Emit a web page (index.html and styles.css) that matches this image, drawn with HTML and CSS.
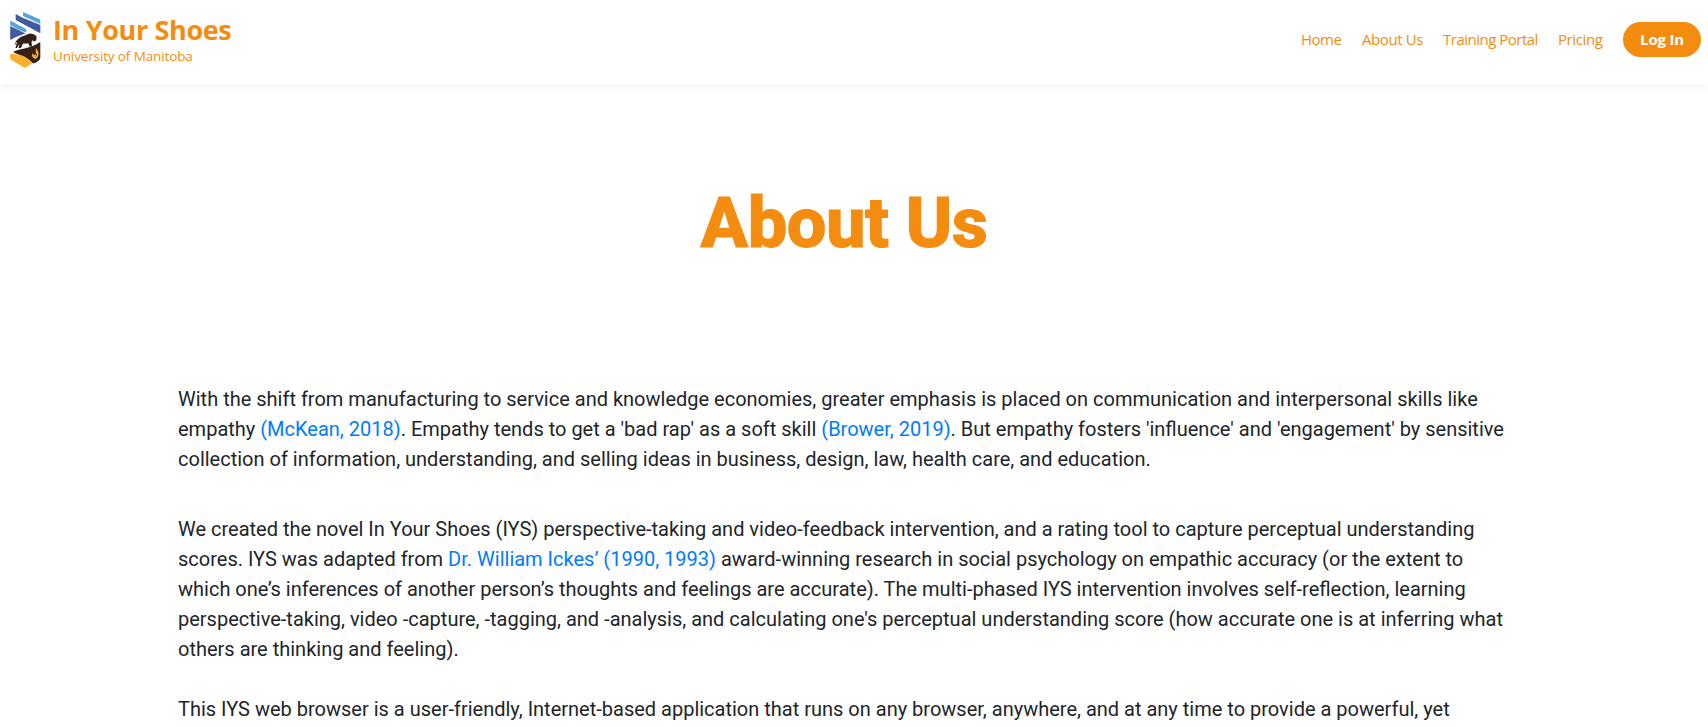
FILE: index.html
```html
<!DOCTYPE html>
<html lang="en"><head><meta charset="utf-8"><title>In Your Shoes</title><link rel="stylesheet" href="styles.css"></head>
<body>
<header class="navbar">
<a class="brand">
<svg class="logo" width="32" height="56" viewBox="0 0 32 56">
<path d="M13 0L30.3 7.5V12L13 4ZM.2 8.5L16 17V20.5L10 18.5L.2 13Z" fill="#55a5d6"/>
<path d="M5.7 2L12 5.5L30.3 13V21.3L5.7 8ZM.2 14L15.5 21.5L7 24.5L.2 28Z" fill="#4059a0"/>
<path d="M9 26.5C11 24 14 24 17 22.5C20 20.5 23 21.5 25 23C27 24 27 26 26 28.5L24 29.5L22.5 28.2L21.5 30L22 34.5H19.5L18.5 31.5H13L11 36H8.5L9.5 31.5L7 36H5.5L7 30C5 30 6 34 4.5 33C5.5 30 6 28 9 26.5Z" fill="#352018"/>
<path d="M3 40C10 36 20 37 30.3 30V45.5Q30 49.5 23 51.5C18 45 9 43.5 3 40Z" fill="#352018"/>
<path d="M.2 42C8 42 17 43 22 51.5L15 56L3 49Q.2 47.5 .2 46Z" fill="#fbaf2f"/>
<path d="M26 36C29 40 30 43 26 47C22 46 21 43 23 41C23 43 24 43 25 43C27 41 25 39 26 36Z" fill="#fbaf2f"/>
<path d="M26 41Q28 43 25.5 45Q26.5 43 26 41Z" fill="#352018"/>
</svg>
<span class="brand-text"><span class="brand-name">In Your Shoes</span><span class="brand-sub">University of Manitoba</span></span></a>
<nav class="links"><a class="home">Home</a><a class="about">About Us</a><a class="training">Training Portal</a><a class="pricing">Pricing</a><a class="login">Log In</a></nav>
</header>
<main class="content">
<h1 class="title">About Us</h1>
<p class="para first">With the shift from manufacturing to service and knowledge economies, greater emphasis is placed on communication and interpersonal skills like<br>empathy <a class="cite">(McKean, 2018)</a>. Empathy tends to get a 'bad rap' as a soft skill <a class="cite">(Brower, 2019)</a>. But empathy fosters 'influence' and 'engagement' by sensitive<br>collection of information, understanding, and selling ideas in business, design, law, health care, and education.</p>
<p class="para">We created the novel In Your Shoes (IYS) perspective-taking and video-feedback intervention, and a rating tool to capture perceptual understanding<br>scores. IYS was adapted from <a class="cite">Dr. William Ickes’ (1990, 1993)</a> award-winning research in social psychology on empathic accuracy (or the extent to<br>which one’s inferences of another person’s thoughts and feelings are accurate). The multi-phased IYS intervention involves self-reflection, learning<br>perspective-taking, video -capture, -tagging, and -analysis, and calculating one's perceptual understanding score (how accurate one is at inferring what<br>others are thinking and feeling).<br><br>This IYS web browser is a user-friendly, Internet-based application that runs on any browser, anywhere, and at any time to provide a powerful, yet</p>
</main>
</body></html>
```
FILE: styles.css
```css
*{box-sizing:border-box}
body{margin:0;background:#fff;color:#212529;font-family:Roboto,sans-serif}
.navbar{height:84px;display:flex;justify-content:space-between;padding:0 7px 0 10px;font-family:"Open Sans",sans-serif;color:#f48c10;box-shadow:0 3px 10px rgba(0,0,0,.05)}
.brand{display:flex;gap:11px;padding-top:12px}
.brand-text{display:flex;flex-direction:column}
.brand-name{font-size:27px;line-height:36px;font-weight:700;letter-spacing:-.35px}
.brand-sub{font-size:13.5px;line-height:18px;margin-top:-1px;letter-spacing:-.13px}
.links{display:flex;align-items:center;gap:20px;font-size:15px;height:79px;white-space:nowrap}
.home,.about,.training,.pricing{padding-bottom:2px}
.home{width:41px;letter-spacing:-.5px}
.about{width:61px;letter-spacing:-.4px}
.training{width:95px;letter-spacing:-.5px}
.pricing{width:45px;letter-spacing:-.4px}
.login{background:#f48c10;color:#fff;font-weight:700;border-radius:18px;height:35px;line-height:35px;width:78px;text-align:center;letter-spacing:-.2px}
.content{padding:0 178px}
.title{margin:97px 0 0;padding-right:20px;text-align:center;font-size:70.4px;line-height:84px;color:#f48c10;font-weight:800;letter-spacing:-.5px;-webkit-text-stroke:1px #f48c10}
.para{font-size:20px;line-height:30px;margin:0 0 40px;white-space:nowrap}
.para:last-child{margin-bottom:0}
.first{margin-top:119px}
.cite{color:#007bff}
```
